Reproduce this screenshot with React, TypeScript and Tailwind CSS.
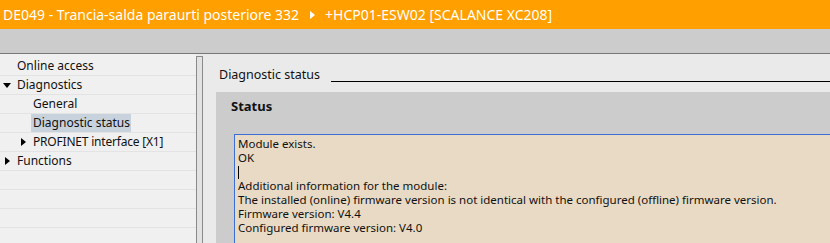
import React from "react";

const font = { fontFamily: '"Noto Sans", "Open Sans", sans-serif' };

function TriDown() {
  return (
    <svg width="8" height="5" viewBox="0 0 8 5" className="shrink-0">
      <polygon points="0,0 8,0 4,5" fill="#000" />
    </svg>
  );
}
function TriRight() {
  return (
    <svg width="5" height="8" viewBox="0 0 5 8" className="shrink-0">
      <polygon points="0,0 5,4 0,8" fill="#000" />
    </svg>
  );
}

function Row({ children, className = "" }: { children?: React.ReactNode; className?: string }) {
  return (
    <div className={"h-[19px] border-b border-[#e3e3e3] flex items-center " + className}>{children}</div>
  );
}

export default function App() {
  return (
    <div className="w-[830px] h-[243px] overflow-hidden flex flex-col bg-[#eaeaea] text-[12px] text-[#111]" style={font}>
      <div className="h-[29px] shrink-0 bg-[#ffa000] flex items-center pl-[3px] text-white text-[14px] whitespace-nowrap">
        <span>DE049 - Trancia-salda paraurti posteriore 332</span>
        <svg width="5" height="8" viewBox="0 0 5 8" className="ml-[11px] mr-[10px]">
          <polygon points="0,0 5,4 0,8" fill="#fff" />
        </svg>
        <span>+HCP01-ESW02 [SCALANCE XC208]</span>
      </div>
      <div className="h-[25px] shrink-0 bg-[#cccccc] border-b border-[#777777]" />
      <div className="flex-1 flex min-h-0">
        <div className="w-[196px] shrink-0 bg-[#f0f0f0] pt-[3px]">
          <Row><span className="pl-[17px]">Online access</span></Row>
          <Row>
            <span className="pl-[3px] w-[17px] flex"><TriDown /></span>
            <span>Diagnostics</span>
          </Row>
          <Row><span className="pl-[33px]">General</span></Row>
          <Row>
            <span className="ml-[31px] pl-[2px] pr-[1px] h-[18px] flex items-center bg-[#c8d2dd] self-start">Diagnostic status</span>
          </Row>
          <Row>
            <span className="pl-[21px] w-[33px] flex"><TriRight /></span>
            <span className="tracking-[-0.2px]">PROFINET interface [X1]</span>
          </Row>
          <Row>
            <span className="pl-[5px] w-[17px] flex"><TriRight /></span>
            <span>Functions</span>
          </Row>
          <Row />
          <Row />
          <Row />
          <Row />
        </div>
        <div className="w-[7px] shrink-0 mt-[2px] bg-[#e2e2e2] border border-b-0 border-[#8a8a8a]" />
        <div className="flex-1 flex flex-col min-w-0 bg-[#eaeaea]">
          <div className="h-[38px] shrink-0 flex items-end pb-[9px] pl-[16px]">
            <span className="text-[12.5px] leading-[16px] whitespace-nowrap">Diagnostic status</span>
            <div className="flex-1 ml-[11px] border-b border-black mb-[1px]" />
          </div>
          <div className="flex-1 ml-[13px] bg-[#cccccc] flex flex-col">
            <div className="h-[42px] shrink-0 pl-[15px] pt-[5px] font-bold text-[13px]">Status</div>
            <div className="flex-1 ml-[18px] bg-[#e8dac4] border-t border-l border-[#3b6fd6] pl-[3px] pt-[2px] text-[11.5px] leading-[14px]">
              <div>Module exists.</div>
              <div>OK</div>
              <div className="h-[14px] flex items-center"><span className="w-px h-[13px] bg-black" /></div>
              <div>Additional information for the module:</div>
              <div className="whitespace-nowrap">The installed (online) firmware version is not identical with the configured (offline) firmware version.</div>
              <div>Firmware version: V4.4</div>
              <div>Configured firmware version: V4.0</div>
            </div>
          </div>
        </div>
      </div>
    </div>
  );
}
